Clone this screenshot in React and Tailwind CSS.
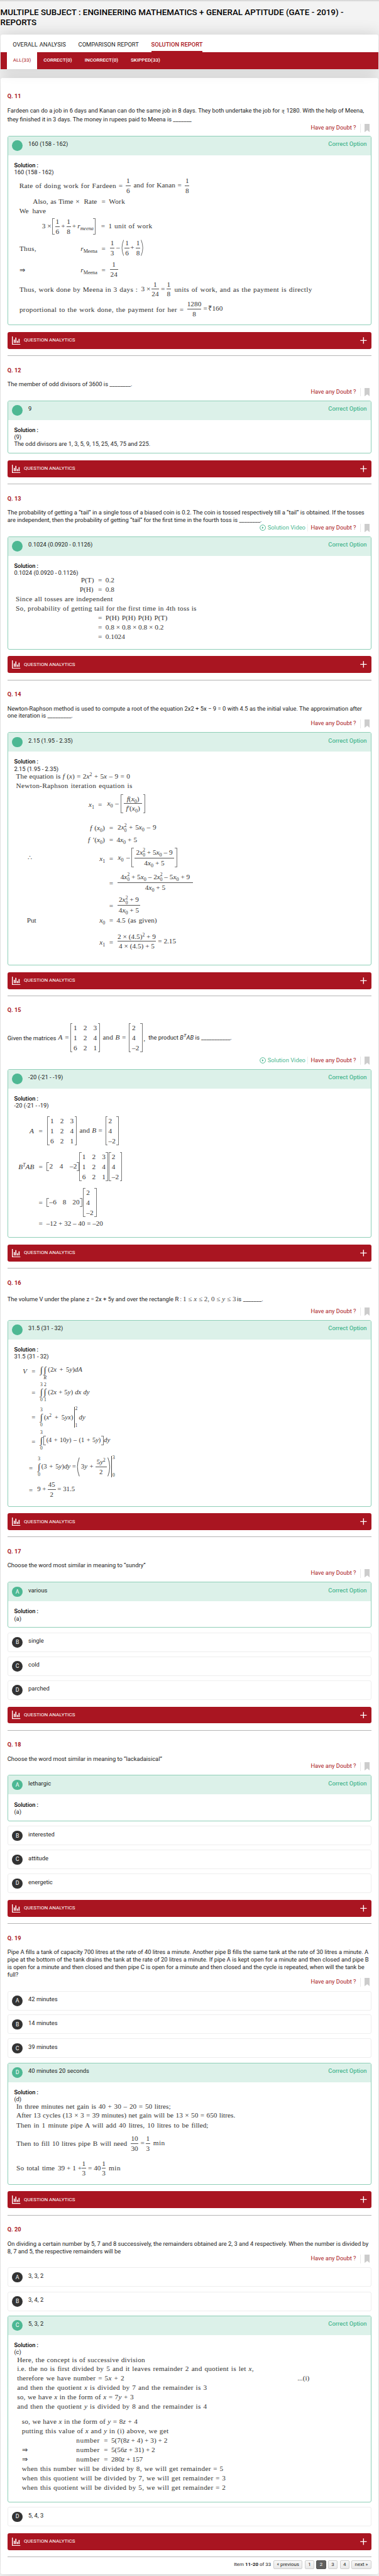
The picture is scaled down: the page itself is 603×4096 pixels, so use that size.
import React from "react";

const SERIF = "font-['Liberation_Serif',serif] font-normal";

/* ---------- math typesetting helpers ---------- */

// A run of text spread over the width given in its classes.
const T = ({ c = "", children }) => (
  <span className={`block shrink-0 whitespace-nowrap [text-align-last:justify] ${c}`}>{children}</span>
);
// Running prose inside a derivation, set slightly wider.
const P = ({ c = "", children }) => <T c={`tracking-[0.026em] ${c}`}>{children}</T>;
// One line of a derivation.
const L = ({ c, children }) => <div className={`flex items-center ${c}`}>{children}</div>;

const Sub = ({ children }) => <span className="text-[0.72em] leading-[0] align-[-0.32em]">{children}</span>;
const Sup = ({ children }) => <span className="text-[0.68em] leading-[0] align-[0.5em]">{children}</span>;
const SupSub = () => (
  <span className="inline-flex flex-col align-middle text-[0.66em] leading-[1.05]">
    <span>2</span>
    <span>0</span>
  </span>
);
const I = ({ children }) => <i>{children}</i>;
const Frac = ({ n, d, c = "" }) => (
  <span className={`flex shrink-0 flex-col items-center whitespace-nowrap ${c}`}>
    <span className="leading-27">{n}</span>
    <span className="h-px w-full bg-[#555]" />
    <span className="leading-27">{d}</span>
  </span>
);
const LB = ({ h = "h-86", c = "" }) => <span className={`block w-7 shrink-0 border-y border-l border-[#777] ${h} ${c}`} />;
const RB = ({ h = "h-86", c = "" }) => <span className={`block w-7 shrink-0 border-y border-r border-[#777] ${h} ${c}`} />;
const LP = ({ c = "" }) => (
  <svg className={`shrink-0 ${c}`} viewBox="0 0 8 50" preserveAspectRatio="none" fill="none" stroke="#555" strokeWidth="1.6">
    <path d="M7 1 Q-3 25 7 49" />
  </svg>
);
const RP = ({ c = "" }) => (
  <svg className={`shrink-0 ${c}`} viewBox="0 0 8 50" preserveAspectRatio="none" fill="none" stroke="#555" strokeWidth="1.6">
    <path d="M1 1 Q11 25 1 49" />
  </svg>
);
const Mat3 = () => (
  <span className="flex w-72 shrink-0 flex-col leading-30">
    {["123", "124", "621"].map((r) => (
      <span key={r} className="flex">
        <span className="w-29.5">{r[0]}</span>
        <span className="w-29.5">{r[1]}</span>
        <span>{r[2]}</span>
      </span>
    ))}
  </span>
);
const Col = () => (
  <span className="flex w-24 shrink-0 flex-col whitespace-nowrap leading-30">
    <span>2</span>
    <span>4</span>
    <span>–2</span>
  </span>
);
const Int = ({ up = "", lo = "", c = "" }) => (
  <span className={`flex w-11 shrink-0 flex-col items-center text-[7.5px] ${c}`}>
    <span className="h-14 leading-14">{up}</span>
    <span className="h-32 text-[14.5px] leading-32">∫</span>
    <span className="h-14 leading-14">{lo}</span>
  </span>
);
const Eval = ({ up, lo, c }) => (
  <span className={`flex shrink-0 flex-col justify-between border-l border-[#444] pl-2 text-[7.5px] leading-12 ${c}`}>
    <span>{up}</span>
    <span>{lo}</span>
  </span>
);
const Derivation = ({ c = "", size = "text-[11.3px]", children }) => (
  <div className={`leading-22 text-[#333] ${SERIF} ${size} ${c}`}>{children}</div>
);

/* ---------- page parts ---------- */

const Bookmark = () => (
  <svg className="h-25 w-16 text-[#cccccc]" viewBox="0 0 16 25" fill="currentColor">
    <path d="M0 0h16v25l-8-6.5L0 25z" />
  </svg>
);

const Tools = ({ video }) => (
  <div className="mb-15.5 flex h-22 items-start justify-end pr-5 leading-22 text-[#a91521]">
    {video && (
      <span className="mr-8 flex items-center border-r border-[#eeeeee] pr-6 text-[#4db893]">
        <svg className="mr-4 size-19" viewBox="0 0 19 19" fill="none" stroke="currentColor" strokeWidth="1.8">
          <circle cx="9.5" cy="9.5" r="8.2" />
          <path d="M7.3 6v7l5-3.5z" fill="currentColor" stroke="none" />
        </svg>
        Solution Video
      </span>
    )}
    <span>Have any Doubt ?</span>
    <span className="ml-12 h-25 w-px bg-[#e8e8e8]" />
    <span className="ml-11">
      <Bookmark />
    </span>
  </div>
);

const Badge = ({ c, children }) => (
  <span className={`flex size-31 shrink-0 items-center justify-center rounded-full text-[8.8px] leading-none text-white ${c}`}>
    {children}
  </span>
);

const Correct = ({ letter = "", text, c, children }) => (
  <div className={`overflow-hidden rounded-[3px] border border-[#8fcfb8] ${c}`}>
    <div className="flex h-56 items-start bg-[#dcf1e9] pt-12 pr-12 pl-12.5">
      <Badge c="bg-[#4db893]">{letter}</Badge>
      <span className="ml-17 leading-22">{text}</span>
      <span className="ml-auto text-[9.41px] leading-22 font-medium text-[#4db893]">Correct Option</span>
    </div>
    <div className="pt-19 pl-18 leading-21">
      <div className="text-[9.2px] font-medium text-black">Solution :</div>
      {children}
    </div>
  </div>
);

const Option = ({ letter, text, c = "mt-13" }) => (
  <div className={`flex h-58 items-start rounded-[3px] border border-[#eeeeee] pt-12 pl-12.5 ${c}`}>
    <Badge c="bg-[#333333]">{letter}</Badge>
    <span className="ml-17 leading-22">{text}</span>
  </div>
);

const Analytics = () => (
  <div className="mt-20 flex h-50 items-center rounded-[3px] bg-[#a91521] pr-14 pl-14 text-[8px] text-white">
    <svg className="size-25" viewBox="0 0 25 25" fill="currentColor">
      <path d="M0 0h2.6v22.4H25V25H0zM5.5 9.5h3v9.5h-3zM10.2 3.5h3V19h-3zM14.9 12.5h3V19h-3zM19.8 7h3v12h-3z" />
    </svg>
    <span className="ml-10">QUESTION ANALYTICS</span>
    <svg className="ml-auto size-20" viewBox="0 0 20 20" fill="none" stroke="currentColor" strokeWidth="2.6">
      <path d="M10 0.5v19M0.5 10h19" />
    </svg>
  </div>
);

const Question = ({ no, c, top = "border-t border-[#b5b5b5] pt-33", body, video, children }) => (
  <section className={`${c} ${top}`}>
    <div className="h-22 text-[9.1px] leading-22 font-bold text-[#a91521]">Q. {no}</div>
    <div className="mt-18 leading-22">{body}</div>
    <Tools video={video} />
    {children}
    <Analytics />
  </section>
);

const PageButton = ({ c, active, children }) => (
  <span
    className={`flex h-26 items-center justify-center rounded-[2px] border ${c} ${
      active ? "border-[#555555] bg-[#5f5f5f] text-white" : "border-[#cfcfcf] bg-linear-to-b from-[#f8f8f8] to-[#e8e8e8] text-[#222222]"
    }`}
  >
    {children}
  </span>
);

/* ---------- derivations ---------- */

const Rm = ({ c = "" }) => (
  <T c={`w-51 ${c}`}>
    <I>r</I>
    <Sub>Meena</Sub>
  </T>
);

const Math11 = () => (
  <Derivation>
    <L c="h-60 pl-15.5">
      <P c="w-308 pt-3">Rate of doing work for Fardeen =</P>
      <Frac n="1" d="6" c="ml-9 w-14" />
      <T c="ml-9 w-143">and for Kanan =</T>
      <Frac n="1" d="8" c="ml-10 w-13" />
    </L>
    <L c="h-37 pl-56">
      <T c="w-139">Also, as Time ×</T>
      <T c="ml-13 w-40">Rate</T>
      <T c="ml-12 w-11">=</T>
      <P c="ml-11 w-52">Work</P>
    </L>
    <L c="h-18 pl-15.5">
      <T c="w-79">We have</T>
    </L>
    <L c="h-72 pl-83">
      <T c="w-26">3 ×</T>
      <LB c="ml-5" h="h-49" />
      <Frac n="1" d="6" c="w-14 ml-1" />
      <T c="ml-4 w-12">+</T>
      <Frac n="1" d="8" c="ml-4 w-13" />
      <T c="ml-4 w-12">+</T>
      <T c="ml-4 w-42">
        <I>
          r<Sub>meena</Sub>
        </I>
      </T>
      <RB c="ml-5" h="h-49" />
      <T c="ml-16 w-11">=</T>
      <P c="ml-11 w-131">1 unit of work</P>
    </L>
    <L c="h-56 pl-16">
      <P c="w-50 pt-8">Thus,</P>
      <Rm c="ml-132 pt-8" />
      <T c="ml-11 w-11 pt-8">=</T>
      <Frac n="1" d="3" c="ml-14 w-14" />
      <T c="ml-5 w-10">–</T>
      <LP c="ml-5 h-49 w-8" />
      <Frac n="1" d="6" c="ml-2 w-14" />
      <T c="ml-3 w-12">+</T>
      <Frac n="1" d="8" c="ml-4 w-14" />
      <RP c="ml-2 h-49 w-8" />
    </L>
    <L c="h-71 pl-16">
      <T c="w-19 pt-6">⇒</T>
      <Rm c="ml-163 pt-6" />
      <T c="ml-11 w-11 pt-6">=</T>
      <Frac n="1" d="24" c="ml-14 w-24" />
    </L>
    <L c="h-46 pl-16">
      <P c="w-352 pt-5">Thus, work done by Meena in 3 days :</P>
      <T c="ml-10 w-26">3 ×</T>
      <Frac n="1" d="24" c="ml-5 w-22" />
      <T c="ml-6 w-11">=</T>
      <Frac n="1" d="8" c="ml-5 w-14" />
      <P c="ml-10 w-410 pt-5">units of work, and as the payment is directly</P>
    </L>
    <L c="h-72 pl-16">
      <P c="w-489 pt-8">proportional to the work done, the payment for her =</P>
      <Frac n="1280" d="8" c="ml-10 w-42" />
      <T c="ml-6 w-11">=</T>
      <T c="ml-4 w-45">₹160</T>
    </L>
  </Derivation>
);

const Math13 = () => (
  <Derivation c="-mt-2.25">
    <L c="h-28.25 pl-199">
      <T c="w-39">P(T)</T>
      <T c="ml-12 w-11">=</T>
      <T c="ml-11 w-27">0.2</T>
    </L>
    <L c="h-28.25 pl-195">
      <T c="w-43">P(H)</T>
      <T c="ml-12 w-11">=</T>
      <T c="ml-11 w-27">0.8</T>
    </L>
    <L c="h-28.25 pl-5">
      <P c="w-289">Since all tosses are independent</P>
    </L>
    <L c="h-28.25 pl-5">
      <P c="w-538">So, probability of getting tail for the first time in 4th toss is</P>
    </L>
    <L c="h-28.25 pl-250">
      <T c="w-11">=</T>
      <T c="ml-11 w-184">P(H) P(H) P(H) P(T)</T>
    </L>
    <L c="h-28.25 pl-250">
      <T c="w-11">=</T>
      <T c="ml-11 w-173">0.8 × 0.8 × 0.8 × 0.2</T>
    </L>
    <L c="h-28.25 pl-250">
      <T c="w-11">=</T>
      <T c="ml-11 w-57">0.1024</T>
    </L>
  </Derivation>
);

const X0 = () => (
  <>
    <I>x</I>
    <Sub>0</Sub>
  </>
);
const X0sq = () => (
  <>
    <I>x</I>
    <SupSub />
  </>
);

const Math14 = () => (
  <Derivation>
    <L c="h-27 pl-6">
      <T c="w-339">
        The equation is <I>f</I> (<I>x</I>) = 2<I>x</I>
        <Sup>2</Sup> + 5<I>x</I> – 9 = 0
      </T>
    </L>
    <L c="h-28 pl-6">
      <P c="w-346">Newton-Raphson iteration equation is</P>
    </L>
    <L c="h-77 pl-222">
      <T c="w-16 pt-8">
        <I>x</I>
        <Sub>1</Sub>
      </T>
      <T c="ml-12 w-11 pt-8">=</T>
      <T c="ml-16 w-17">
        <X0 />
      </T>
      <T c="ml-7 w-11">–</T>
      <LB c="ml-5" h="h-57" />
      <Frac
        c="ml-3 w-54"
        n={
          <>
            <I>f</I>(<X0 />)
          </>
        }
        d={
          <>
            <I>f</I>′(<X0 />)
          </>
        }
      />
      <RB c="ml-3" h="h-57" />
    </L>
    <L c="h-59 pt-9 pl-226">
      <T c="w-44">
        <I>f</I> (<X0 />)
      </T>
      <T c="ml-13 w-11">=</T>
      <T c="ml-14 w-115">
        2<X0sq /> + 5<X0 /> – 9
      </T>
    </L>
    <L c="h-22 pl-220">
      <T c="w-50">
        <I>f</I> ′(<X0 />)
      </T>
      <T c="ml-13 w-11">=</T>
      <T c="ml-11 w-61">
        4<X0 /> + 5
      </T>
    </L>
    <L c="h-82 pl-41">
      <T c="w-12 pt-6">∴</T>
      <T c="ml-201 w-16 pt-7">
        <I>x</I>
        <Sub>1</Sub>
      </T>
      <T c="ml-13 w-11 pt-7">=</T>
      <T c="ml-15 w-18">
        <X0 />
      </T>
      <T c="ml-7 w-10">–</T>
      <LB c="ml-5" h="h-57" />
      <Frac
        c="ml-3 w-117"
        n={
          <>
            2<X0sq /> + 5<X0 /> – 9
          </>
        }
        d={
          <>
            4<X0 /> + 5
          </>
        }
      />
      <RB c="ml-3" h="h-57" />
    </L>
    <L c="h-63 pl-283">
      <T c="w-11 pt-8">=</T>
      <Frac
        c="ml-14 w-224"
        n={
          <>
            4<X0sq /> + 5<X0 /> – 2<X0sq /> – 5<X0 /> + 9
          </>
        }
        d={
          <>
            4<X0 /> + 5
          </>
        }
      />
    </L>
    <L c="h-74 pl-283">
      <T c="w-11 pt-8">=</T>
      <Frac
        c="ml-14 w-67"
        n={
          <>
            2<X0sq /> + 9
          </>
        }
        d={
          <>
            4<X0 /> + 5
          </>
        }
      />
    </L>
    <L c="h-18 pl-38">
      <T c="w-30">Put</T>
      <T c="ml-186 w-16">
        <X0 />
      </T>
      <T c="ml-13 w-11">=</T>
      <T c="ml-11 w-120">4.5 (as given)</T>
    </L>
    <L c="h-106 pl-254">
      <T c="w-16 pt-7">
        <I>x</I>
        <Sub>1</Sub>
      </T>
      <T c="ml-13 w-11 pt-7">=</T>
      <Frac
        c="ml-14 w-114"
        n={
          <>
            2 × (4.5)<Sup>2</Sup> + 9
          </>
        }
        d="4 × (4.5) + 5"
      />
      <T c="ml-6 w-52">= 2.15</T>
    </L>
  </Derivation>
);

const Question15 = () => (
  <div className="mb-4 flex h-103 items-center">
    <T c="w-145 mt-1">Given the matrices</T>
    <div className={`flex items-center text-[11.3px] text-[#333] ${SERIF}`}>
      <T c="ml-6 w-32">
        <I>A</I> =
      </T>
      <LB c="ml-4" />
      <span className="w-3" />
      <Mat3 />
      <RB />
      <T c="ml-8 w-69">
        and <I>B</I> =
      </T>
      <LB c="ml-8" />
      <span className="w-3" />
      <Col />
      <RB />
      <T c="ml-3 w-7 pt-8">,</T>
    </div>
    <T c="ml-8 w-248">
      the product <I>B</I>
      <span className="align-[0.45em] text-[0.85em] leading-[0] italic">T</span>
      <I>AB</I> is ___________.
    </T>
  </div>
);

const Math15 = () => (
  <Derivation c="pt-10">
    <L c="h-109 pl-46">
      <T c="w-15 pt-3">
        <I>A</I>
      </T>
      <T c="ml-12 w-12 pt-3">=</T>
      <LB c="ml-14" />
      <span className="w-2" />
      <Mat3 />
      <RB />
      <T c="ml-8 w-68">
        and <I>B</I> =
      </T>
      <LB c="ml-9" />
      <span className="w-2" />
      <Col />
      <RB />
    </L>
    <L c="h-105 pl-13">
      <T c="w-48 pt-4">
        <I>
          B<Sup>T</Sup>AB
        </I>
      </T>
      <T c="ml-12 w-12 pt-4">=</T>
      <LB c="ml-12" h="h-27" />
      <T c="ml-1 w-82">2 4 –2</T>
      <RB h="h-27" />
      <LB />
      <span className="w-2" />
      <Mat3 />
      <RB c="-ml-2" />
      <LB c="ml-2" />
      <span className="w-2" />
      <Col />
      <RB />
    </L>
    <L c="h-107 pl-73">
      <T c="w-12 pt-4">=</T>
      <LB c="ml-12" h="h-27" />
      <T c="ml-1 w-90">–6 8 20</T>
      <RB c="ml-1" h="h-27" />
      <LB c="ml-3" />
      <span className="w-2" />
      <Col />
      <RB />
    </L>
    <L c="h-22 pl-73">
      <T c="w-12">=</T>
      <T c="ml-11 w-168 text-[11.1px]">–12 + 32 – 40 = –20</T>
    </L>
  </Derivation>
);

const Question16 = () => (
  <div className="mb-4.5 flex h-38 items-center">
    <T c="w-518">The volume V under the plane z = 2x + 5y and over the rectangle R :</T>
    <T c={`ml-4 w-158 text-[11px] text-[#444] ${SERIF}`}>
      1 ≤ <I>x</I> ≤ 2, 0 ≤ <I>y</I> ≤ 3
    </T>
    <T c="ml-3 w-78">is _______.</T>
  </div>
);

const Math16 = () => (
  <Derivation size="text-[10.8px]">
    <L c="h-60 pl-26">
      <T c="w-13 pt-8">
        <I>V</I>
      </T>
      <T c="ml-13 w-11 pt-8">=</T>
      <Int c="ml-13" />
      <Int lo={<I>R</I>} />
      <T c="ml-3 w-102">
        (2<I>x</I> + 5<I>y</I>)<I>dA</I>
      </T>
    </L>
    <L c="h-73 pl-52">
      <T c="w-11 pt-4">=</T>
      <Int up="3" lo="0" c="ml-13" />
      <Int up="2" lo="1" />
      <T c="ml-3 w-124">
        (2<I>x</I> + 5<I>y</I>) <I>dx dy</I>
      </T>
    </L>
    <L c="h-76 pl-52">
      <T c="w-11">=</T>
      <Int up="3" lo="0" c="ml-13" />
      <T c="ml-2 w-87">
        (<I>x</I>
        <Sup>2</Sup> + 5<I>yx</I>)
      </T>
      <Eval up="2" lo="1" c="ml-2 h-62 w-12" />
      <T c="ml-3 w-20">
        <I>dy</I>
      </T>
    </L>
    <L c="h-61 pl-52">
      <T c="w-11 pt-10">=</T>
      <Int up="3" lo="0" c="ml-13" />
      <LB c="ml-1" h="h-27" />
      <T c="ml-1 w-162 text-[10.4px]">
        (4 + 10<I>y</I>) – (1 + 5<I>y</I>)
      </T>
      <RB c="ml-1" h="h-27" />
      <T c="ml-1 w-20">
        <I>dy</I>
      </T>
    </L>
    <L c="h-95 pl-44">
      <T c="w-11 pt-10">=</T>
      <Int up="3" lo="0" c="ml-14" />
      <T c="ml-1 w-87">
        (3 + 5<I>y</I>)<I>dy</I>
      </T>
      <T c="ml-5 w-12">=</T>
      <LP c="ml-2 h-58 w-9" />
      <T c="ml-3 w-37">
        3<I>y</I> +
      </T>
      <Frac
        c="ml-6 w-34"
        n={
          <>
            5<I>y</I>
            <Sup>2</Sup>
          </>
        }
        d="2"
      />
      <RP c="ml-2 h-58 w-9" />
      <Eval up="3" lo="0" c="ml-2 h-64 w-12" />
    </L>
    <L c="h-40 pl-44">
      <T c="w-11 pt-5">=</T>
      <T c="ml-14 w-26">9 +</T>
      <Frac n="45" d="2" c="ml-5 w-24" />
      <T c="ml-5 w-52">= 31.5</T>
    </L>
  </Derivation>
);

const Math19 = () => (
  <Derivation>
    <L c="h-25 pl-7">
      <T c="w-459">In three minutes net gain is 40 + 30 – 20 = 50 litres;</T>
    </L>
    <L c="h-28 pl-7">
      <T c="w-651">After 13 cycles (13 × 3 = 39 minutes) net gain will be 13 × 50 = 650 litres.</T>
    </L>
    <L c="h-30 pl-7">
      <T c="w-571">Then in 1 minute pipe A will add 40 litres, 10 litres to be filled;</T>
    </L>
    <L c="h-77 pl-7">
      <T c="w-329 pt-3">Then to fill 10 litres pipe B will need</T>
      <Frac n="10" d="30" c="ml-11 w-23" />
      <T c="ml-6 w-11">=</T>
      <Frac n="1" d="3" c="ml-5 w-13" />
      <T c="ml-9 w-35 tracking-[0.04em]">min</T>
    </L>
    <L c="h-71 pl-7">
      <T c="w-114">So total time</T>
      <T c="ml-9 w-67">39 + 1 +</T>
      <Frac n="1" d="3" c="ml-4 w-13" />
      <T c="ml-6 w-38">= 40</T>
      <Frac n="1" d="3" c="ml-3 w-12" />
      <T c="ml-9 w-36 tracking-[0.04em]">min</T>
    </L>
  </Derivation>
);

const NumberWord = ({ c = "" }) => <T c={`w-70 tracking-[0.045em] ${c}`}>number</T>;

const Math20 = () => (
  <Derivation>
    <L c="h-27.75 pl-9">
      <T c="w-381 tracking-[0.02em]">Here, the concept is of successive division</T>
    </L>
    <L c="h-27.75 pl-9">
      <T c="w-704 tracking-[0.015em]">
        i.e. the no is first divided by 5 and it leaves remainder 2 and quotient is let <I>x</I>,
      </T>
    </L>
    <L c="h-27.75 pl-9">
      <T c="w-319 tracking-[0.015em]">
        therefore we have number = 5<I>x</I> + 2
      </T>
      <T c="ml-515 w-36">...(i)</T>
    </L>
    <L c="h-27.75 pl-9">
      <P c="w-565">
        and then the quotient <I>x</I> is divided by 7 and the remainder is 3
      </P>
    </L>
    <L c="h-27.75 pl-9">
      <T c="w-347 tracking-[0.015em]">
        so, we have <I>x</I> in the form of <I>x</I> = 7<I>y</I> + 3
      </T>
    </L>
    <L c="h-27.75 pl-9">
      <P c="w-565">
        and then the quotient <I>y</I> is divided by 8 and the remainder is 4
      </P>
    </L>
    <L c="mt-17 h-28 pl-23">
      <T c="w-345 tracking-[0.015em]">
        so, we have <I>x</I> in the form of <I>y</I> = 8<I>z</I> + 4
      </T>
    </L>
    <L c="h-28 pl-23">
      <P c="w-437">
        putting this value of <I>x</I> and <I>y</I> in (i) above, we get
      </P>
    </L>
    <L c="h-28 pl-185">
      <NumberWord />
      <T c="ml-12 w-11">=</T>
      <T c="ml-11 w-167">
        5(7(8<I>z</I> + 4) + 3) + 2
      </T>
    </L>
    <L c="h-28 pl-23">
      <T c="w-20">⇒</T>
      <NumberWord c="ml-142" />
      <T c="ml-12 w-11">=</T>
      <T c="ml-11 w-130">
        5(56<I>z</I> + 31) + 2
      </T>
    </L>
    <L c="h-28 pl-23">
      <T c="w-20">⇒</T>
      <NumberWord c="ml-142" />
      <T c="ml-12 w-11">=</T>
      <T c="ml-11 w-92">
        280<I>z</I> + 157
      </T>
    </L>
    <L c="h-28 pl-23">
      <P c="w-600">when this number will be divided by 8, we will get remainder = 5</P>
    </L>
    <L c="h-28 pl-23">
      <P c="w-607">when this quotient will be divided by 7, we will get remainder = 3</P>
    </L>
    <L c="h-28 pl-23">
      <P c="w-607">when this quotient will be divided by 5, we will get remainder = 2</P>
    </L>
  </Derivation>
);

/* ---------- page ---------- */

export default function App() {
  return (
    <div className="h-[4096px] w-[603px] overflow-hidden bg-[#f3f3f3] font-[Roboto,sans-serif] text-[9.35px] text-[#1a1a1a] [--spacing:0.5348px]">
      <div className="h-6 bg-linear-to-b from-[#cfcfcf] to-[#f3f3f3]" />
      <h1 className="h-96 pt-17 pl-1 text-[13.33px] leading-30 font-medium text-black">
        <T c="w-1021">MULTIPLE SUBJECT : ENGINEERING MATHEMATICS + GENERAL APTITUDE (GATE - 2019) -</T>
        REPORTS
      </h1>

      <header className="relative z-10 mr-2 ml-1 h-104 rounded-t-[3px] bg-white shadow-[0_0_24px_rgba(0,0,0,0.16)]">
        <nav className="flex h-54 items-stretch pl-37 leading-60">
          <T c="w-158">OVERALL ANALYSIS</T>
          <T c="ml-37 w-180">COMPARISON REPORT</T>
          <T c="ml-37 w-153 border-b-2 border-[#a91521] font-medium text-[#a91521]">SOLUTION REPORT</T>
        </nav>
        <nav className="flex h-50 bg-[#a91521] pl-19 text-[8px] leading-50 font-medium text-white">
          <span className="w-91 bg-white text-center font-normal text-[#a91521]">ALL(33)</span>
          <span className="ml-18.5 w-122.5">CORRECT(0)</span>
          <span className="w-137">INCORRECT(0)</span>
          <span>SKIPPED(33)</span>
        </nav>
      </header>

      <main className="mt-26 mr-2.5 ml-2 h-7421 rounded-[3px] bg-white px-20 shadow-[0_0_24px_rgba(0,0,0,0.16)]">
        <Question
          no={11}
          c="h-824.5"
          top="pt-45"
          body={
            <div className="pb-2 leading-25">
              <T c="w-1061">
                Fardeen can do a job in 6 days and Kanan can do the same job in 8 days. They both undertake the job for{" "}
                <span className="align-[-2px] font-['DejaVu_Sans',sans-serif] text-[8.5px] leading-[0] text-[#555]">₹</span> 1280. With
                the help of Meena,
              </T>
              <div>they finished it in 3 days. The money in rupees paid to Meena is _______</div>
            </div>
          }
        >
          <Correct text="160 (158 - 162)" c="-mt-3 h-564">
            <div>160 (158 - 162)</div>
            <Math11 />
          </Correct>
        </Question>

        <Question no={12} c="h-382" body="The member of odd divisors of 3600 is ________.">
          <Correct text="9" c="h-158">
            <div>(9)</div>
            <div>The odd divisors are 1, 3, 5, 9, 15, 25, 45, 75 and 225.</div>
          </Correct>
        </Question>

        <Question
          no={13}
          c="h-582.25"
          video
          body={
            <>
              <T c="w-1062">
                The probability of getting a “tail” in a single toss of a biased coin is 0.2. The coin is tossed respectively till a
                “tail” is obtained. If the tosses
              </T>
              <T c="w-757">
                are independent, then the probability of getting “tail” for the first time in the fourth toss is ________.
              </T>
            </>
          }
        >
          <Correct text="0.1024 (0.0920 - 0.1126)" c="h-336">
            <div>0.1024 (0.0920 - 0.1126)</div>
            <Math13 />
          </Correct>
        </Question>

        <Question
          no={14}
          c="h-938.75"
          body={
            <>
              <T c="w-1055">
                Newton-Raphson method is used to compute a root of the equation 2x2 + 5x − 9 = 0 with 4.5 as the initial value. The
                approximation after
              </T>
              <div>one iteration is _________.</div>
            </>
          }
        >
          <Correct text="2.15 (1.95 - 2.35)" c="h-694">
            <div>2.15 (1.95 - 2.35)</div>
            <Math14 />
          </Correct>
        </Question>

        <Question no={15} c="h-810.25" video body={<Question15 />}>
          <Correct text="-20 (-21 - -19)" c="h-502">
            <div>-20 (-21 - -19)</div>
            <Math15 />
          </Correct>
        </Question>

        <Question no={16} c="h-799.25" body={<Question16 />}>
          <Correct text="31.5 (31 - 32)" c="h-555">
            <div>31.5 (31 - 32)</div>
            <Math16 />
          </Correct>
        </Question>

        <Question no={17} c="h-574.5" body="Choose the word most similar in meaning to “sundry”">
          <Correct letter="A" text="various" c="h-137">
            <div>(a)</div>
          </Correct>
          <Option letter="B" text="single" c="mt-14" />
          <Option letter="C" text="cold" />
          <Option letter="D" text="parched" />
        </Question>

        <Question no={18} c="h-575.5" body="Choose the word most similar in meaning to “lackadaisical”">
          <Correct letter="A" text="lethargic" c="h-137">
            <div>(a)</div>
          </Correct>
          <Option letter="B" text="interested" c="mt-14" />
          <Option letter="C" text="attitude" />
          <Option letter="D" text="energetic" />
        </Question>

        <Question
          no={19}
          c="h-866.5"
          body={
            <>
              <T c="w-1074">
                Pipe A fills a tank of capacity 700 litres at the rate of 40 litres a minute. Another pipe B fills the same tank at the
                rate of 30 litres a minute. A
              </T>
              <T c="w-1075">
                pipe at the bottom of the tank drains the tank at the rate of 20 litres a minute. If pipe A is kept open for a minute and
                then closed and pipe B
              </T>
              <T c="w-1062">
                is open for a minute and then closed and then pipe C is open for a minute and then closed and the cycle is repeated, when
                will the tank be
              </T>
              <div>full?</div>
            </>
          }
        >
          <Option letter="A" text="42 minutes" c="" />
          <Option letter="B" text="14 minutes" />
          <Option letter="C" text="39 minutes" />
          <Correct letter="D" text="40 minutes 20 seconds" c="mt-13.5 h-363">
            <div>(d)</div>
            <Math19 />
          </Correct>
        </Question>

        <Question
          no={20}
          c="h-1016"
          body={
            <>
              <T c="w-1074">
                On dividing a certain number by 5, 7 and 8 successively, the remainders obtained are 2, 3 and 4 respectively. When the
                number is divided by
              </T>
              <div>8, 7 and 5, the respective remainders will be</div>
            </>
          }
        >
          <Option letter="A" text="3, 3, 2" c="" />
          <Option letter="B" text="3, 4, 2" c="mt-13.5" />
          <Correct letter="C" text="5, 3, 2" c="mt-13 h-556.5">
            <div>(c)</div>
            <Math20 />
          </Correct>
          <Option letter="D" text="5, 4, 3" />
        </Question>

        <footer className="flex items-center justify-end border-t border-[#b5b5b5] pt-9 text-[7.9px]">
          <span>
            Item <b className="font-bold">11-20</b> of 33
          </span>
          <PageButton c="ml-7 w-87">« previous</PageButton>
          <PageButton c="ml-6 w-29">1</PageButton>
          <PageButton c="ml-6 w-29" active>
            2
          </PageButton>
          <PageButton c="ml-6 w-28">3</PageButton>
          <PageButton c="ml-7 w-28">4</PageButton>
          <PageButton c="ml-6 w-60">next »</PageButton>
        </footer>
      </main>
    </div>
  );
}
